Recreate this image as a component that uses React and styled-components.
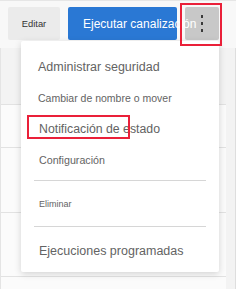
import React from "react";
import styled, { createGlobalStyle } from "styled-components";

const GlobalStyle = createGlobalStyle`
  html, body {
    margin: 0;
    padding: 0;
    background: #f8f8f8;
    font-family: "Liberation Sans", Arial, sans-serif;
  }
  #root {
    width: 236px;
    height: 289px;
    overflow: hidden;
  }
`;

const Page = styled.div`
  position: relative;
  width: 236px;
  height: 289px;
  display: flex;
  flex-direction: column;
  border-top: 1px solid #e6e6e6;
  box-sizing: border-box;
  background: #f8f8f8;
`;

const Toolbar = styled.div`
  display: flex;
  gap: 8px;
  padding: 6px 8px 0 8px;
  height: 33px;
`;

const Button = styled.div`
  height: 33px;
  width: ${(p) => p.$w}px;
  box-sizing: border-box;
  display: flex;
  align-items: center;
  justify-content: ${(p) => (p.$center ? "center" : "flex-start")};
  border-radius: 2px;
  background: ${(p) => p.$bg};
  color: ${(p) => p.$color};
  font-size: ${(p) => p.$size}px;
  white-space: nowrap;
  position: relative;
`;

const RunLabel = styled.span`
  position: relative;
  z-index: 2;
  padding-left: 15px;
`;

const Dots = styled.div`
  display: flex;
  flex-direction: column;
  gap: 4px;
  margin-top: -1px;
  span {
    width: 2px;
    height: 3px;
    background: #3a3a3a;
  }
`;

const Highlight = styled.div`
  position: absolute;
  border: 2px solid #ea2039;
  box-sizing: border-box;
  left: ${(p) => p.$l}px;
  top: ${(p) => p.$t}px;
  width: ${(p) => p.$w}px;
  height: ${(p) => p.$h}px;
  pointer-events: none;
  z-index: 3;
`;

const Body = styled.div`
  display: flex;
  flex: 1;
  margin-top: 8px;
`;

const Table = styled.div`
  width: 226px;
  display: flex;
  flex-direction: column;
  border-left: 1px solid #e4e4e4;
  box-sizing: border-box;
`;

const Row = styled.div`
  height: ${(p) => p.$h}px;
  flex-shrink: 0;
  background: ${(p) => (p.$head ? "#f3f3f3" : "#fbfbfb")};
  border-bottom: 1px solid #e2e2e2;
  box-sizing: border-box;
`;

const Scroll = styled.div`
  flex: 1;
  background: #f3f3f3;
  border-right: 1px solid #dedede;
`;

const Menu = styled.div`
  position: absolute;
  left: 21px;
  top: 40px;
  width: 198px;
  height: 231px;
  background: #fff;
  border-radius: 2px;
  box-shadow: 0 2px 7px rgba(0, 0, 0, 0.16);
  padding-top: 10px;
  box-sizing: border-box;
  display: flex;
  flex-direction: column;
`;

const Item = styled.div`
  position: relative;
  height: ${(p) => p.$h || 31}px;
  display: flex;
  align-items: center;
  padding-left: ${(p) => p.$pl || 17}px;
  padding-top: ${(p) => p.$pt || 0}px;
  box-sizing: border-box;
  font-size: ${(p) => p.$size}px;
  color: #636363;
  white-space: nowrap;
`;

const Divider = styled.div`
  height: 1px;
  background: #d6d6d6;
  margin: ${(p) => p.$mt}px 13px 0 13px;
`;

export default function App() {
  return (
    <>
      <GlobalStyle />
      <Page>
        <Toolbar>
          <Button $w={52} $bg="#ebebeb" $color="#333" $size={9.4} $center>
            Editar
          </Button>
          <Button $w={109} $bg="#2a78d4" $color="#fff" $size={12}>
            <RunLabel>Ejecutar canalización</RunLabel>
          </Button>
          <Button $w={34} $bg="#c8c8c8" $center>
            <Dots>
              <span />
              <span />
              <span />
            </Dots>
            <Highlight $l={-5} $t={-4} $w={42} $h={43} />
          </Button>
        </Toolbar>
        <Body>
          <Table>
            <Row $h={57} $head />
            <Row $h={43} />
            <Row $h={65} />
            <Row $h={64} />
            <Row $h={20} />
          </Table>
          <Scroll />
        </Body>
        <Menu>
          <Item $size={12.5}>Administrar seguridad</Item>
          <Item $size={10.5}>Cambiar de nombre o mover</Item>
          <Item $size={12.3} $pl={18}>
            Notificación de estado
            <Highlight $l={6} $t={2} $w={103} $h={24} />
          </Item>
          <Item $size={10.7} $pl={18}>
            Configuración
          </Item>
          <Divider $mt={5} />
          <Item $size={9} $h={45} $pl={18}>
            Eliminar
          </Item>
          <Divider $mt={0} />
          <Item $size={12.5} $h={45} $pl={18} $pt={3}>
            Ejecuciones programadas
          </Item>
        </Menu>
      </Page>
    </>
  );
}
